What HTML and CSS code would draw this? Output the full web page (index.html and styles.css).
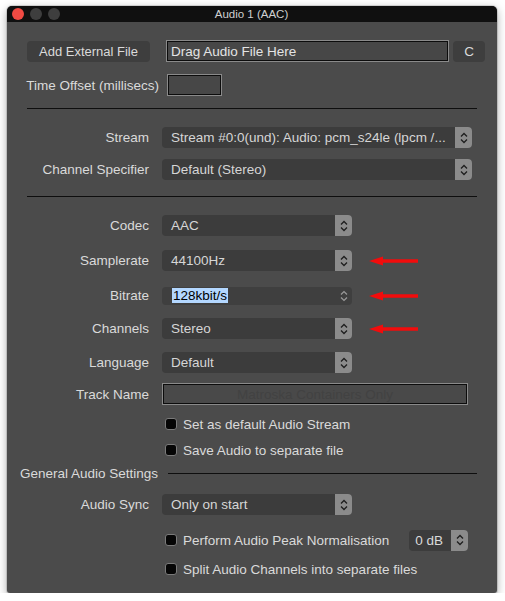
FILE: index.html
```html
<!DOCTYPE html>
<html>
<head>
<meta charset="utf-8">
<link rel="stylesheet" href="styles.css">
</head>
<body>
<div class="window">
  <div class="titlebar">
    <div class="lights"><span class="light red"></span><span class="light"></span><span class="light"></span></div>
    <div class="title">Audio 1 (AAC)</div>
  </div>
  <div class="content">
    <div class="row top">
      <div class="btn add">Add External File</div>
      <div class="field drag">Drag Audio File Here</div>
      <div class="btn c">C</div>
    </div>
    <div class="row offset">
      <div class="lbl wide">Time Offset (millisecs)</div>
      <div class="field small"></div>
    </div>
    <div class="sep s1"></div>
    <div class="row r-stream">
      <div class="lbl">Stream</div>
      <div class="popup long"><span class="ptext">Stream #0:0(und): Audio: pcm_s24le (lpcm /...</span><span class="stepper"><svg width="8" height="12" viewBox="0 0 8 12"><path d="M1 4.5 L4 1.5 L7 4.5 M1 7.5 L4 10.5 L7 7.5" fill="none" stroke="#1e1e1e" stroke-width="1.3"/></svg></span></div>
    </div>
    <div class="row r-chan">
      <div class="lbl">Channel Specifier</div>
      <div class="popup long"><span class="ptext">Default (Stereo)</span><span class="stepper"><svg width="8" height="12" viewBox="0 0 8 12"><path d="M1 4.5 L4 1.5 L7 4.5 M1 7.5 L4 10.5 L7 7.5" fill="none" stroke="#1e1e1e" stroke-width="1.3"/></svg></span></div>
    </div>
    <div class="sep s2"></div>
    <div class="row r-codec">
      <div class="lbl">Codec</div>
      <div class="popup mid"><span class="ptext">AAC</span><span class="stepper"><svg width="8" height="12" viewBox="0 0 8 12"><path d="M1 4.5 L4 1.5 L7 4.5 M1 7.5 L4 10.5 L7 7.5" fill="none" stroke="#1e1e1e" stroke-width="1.3"/></svg></span></div>
    </div>
    <div class="row r-sample">
      <div class="lbl">Samplerate</div>
      <div class="popup mid"><span class="ptext">44100Hz</span><span class="stepper"><svg width="8" height="12" viewBox="0 0 8 12"><path d="M1 4.5 L4 1.5 L7 4.5 M1 7.5 L4 10.5 L7 7.5" fill="none" stroke="#1e1e1e" stroke-width="1.3"/></svg></span></div>
      <svg class="arrow" width="49" height="10" viewBox="0 0 49 10"><path d="M0 5 L14 0.5 L14 3.3 L49 3.3 L49 6.7 L14 6.7 L14 9.5 Z" fill="#f20c0c"/></svg>
    </div>
    <div class="row r-bit">
      <div class="lbl">Bitrate</div>
      <div class="combo"><span class="sel">128kbit/s</span><span class="cstep"><svg width="8" height="12" viewBox="0 0 8 12"><path d="M1 4.5 L4 1.5 L7 4.5 M1 7.5 L4 10.5 L7 7.5" fill="none" stroke="#9a9a9a" stroke-width="1.2"/></svg></span></div>
      <svg class="arrow" width="49" height="10" viewBox="0 0 49 10"><path d="M0 5 L14 0.5 L14 3.3 L49 3.3 L49 6.7 L14 6.7 L14 9.5 Z" fill="#f20c0c"/></svg>
    </div>
    <div class="row r-chs">
      <div class="lbl">Channels</div>
      <div class="popup mid"><span class="ptext">Stereo</span><span class="stepper"><svg width="8" height="12" viewBox="0 0 8 12"><path d="M1 4.5 L4 1.5 L7 4.5 M1 7.5 L4 10.5 L7 7.5" fill="none" stroke="#1e1e1e" stroke-width="1.3"/></svg></span></div>
      <svg class="arrow" width="49" height="10" viewBox="0 0 49 10"><path d="M0 5 L14 0.5 L14 3.3 L49 3.3 L49 6.7 L14 6.7 L14 9.5 Z" fill="#f20c0c"/></svg>
    </div>
    <div class="row r-lang">
      <div class="lbl">Language</div>
      <div class="popup mid"><span class="ptext">Default</span><span class="stepper"><svg width="8" height="12" viewBox="0 0 8 12"><path d="M1 4.5 L4 1.5 L7 4.5 M1 7.5 L4 10.5 L7 7.5" fill="none" stroke="#1e1e1e" stroke-width="1.3"/></svg></span></div>
    </div>
    <div class="row r-track">
      <div class="lbl">Track Name</div>
      <div class="field track">Matroska Containers Only</div>
    </div>
    <div class="row cb r-cb1"><span class="box"></span><span>Set as default Audio Stream</span></div>
    <div class="row cb r-cb2"><span class="box"></span><span>Save Audio to separate file</span></div>
    <div class="row r-gas">
      <div class="gas">General Audio Settings</div>
      <div class="gline"></div>
    </div>
    <div class="row r-sync">
      <div class="lbl">Audio Sync</div>
      <div class="popup mid"><span class="ptext">Only on start</span><span class="stepper"><svg width="8" height="12" viewBox="0 0 8 12"><path d="M1 4.5 L4 1.5 L7 4.5 M1 7.5 L4 10.5 L7 7.5" fill="none" stroke="#1e1e1e" stroke-width="1.3"/></svg></span></div>
    </div>
    <div class="row cb r-cb3"><span class="box"></span><span>Perform Audio Peak Normalisation</span>
      <div class="spin"><span class="stext">0 dB</span><span class="stepper"><svg width="8" height="12" viewBox="0 0 8 12"><path d="M1 4.5 L4 1.5 L7 4.5 M1 7.5 L4 10.5 L7 7.5" fill="none" stroke="#1e1e1e" stroke-width="1.3"/></svg></span></div>
    </div>
    <div class="row cb r-cb4"><span class="box"></span><span>Split Audio Channels into separate files</span></div>
  </div>
</div>
</body>
</html>
```

FILE: styles.css
```css
html, body {
  margin: 0;
  padding: 0;
  background: #ffffff;
}
body {
  font-family: "Liberation Sans", Arial, sans-serif;
  font-size: 13.5px;
  color: #dadada;
}
.window {
  margin: 6px 0 0 7px;
  width: 490px;
  height: 587px;
  background: #4b4b4b;
  border-radius: 5px 5px 3px 3px;
  box-shadow: 0 3px 10px rgba(0,0,0,0.35), 0 0 0 1px rgba(0,0,0,0.12);
  overflow: hidden;
  display: flex;
  flex-direction: column;
}
.titlebar {
  height: 16px;
  background: #101010;
  display: flex;
  align-items: center;
  flex: none;
}
.lights {
  display: flex;
  gap: 6px;
  padding-left: 5px;
}
.light {
  width: 12px;
  height: 12px;
  border-radius: 50%;
  background: #3e3e3e;
}
.light.red { background: #f04a43; }
.title {
  flex: 1;
  text-align: center;
  font-size: 11.5px;
  color: #cfcfcf;
  margin-left: -54px;
}
.content {
  display: flex;
  flex-direction: column;
}
.row {
  display: flex;
  align-items: center;
}
.lbl {
  width: 142px;
  margin-right: 13px;
  text-align: right;
  flex: none;
  white-space: nowrap;
}
.lbl.wide {
  width: 152px;
  margin-right: 8px;
}
.top {
  margin-top: 18px;
  padding-left: 20px;
  height: 22px;
}
.btn {
  height: 21px;
  background: #3e3e3e;
  border-radius: 4px;
  display: flex;
  align-items: center;
  justify-content: center;
  color: #dadada;
  white-space: nowrap;
}
.btn.add { width: 123px; font-size: 13px; }
.btn.c { width: 32px; margin-left: 4px; }
.field {
  box-sizing: border-box;
  border: 1px solid #8a8a8a;
  box-shadow: inset 0 0 0 1px #0c0c0c;
  background: #474747;
}
.field.drag {
  width: 283px;
  height: 22px;
  margin-left: 16px;
  padding-left: 4px;
  display: flex;
  align-items: center;
  color: #e4e4e4;
}
.offset {
  margin-top: 12px;
  height: 22px;
}
.field.small {
  width: 55px;
  height: 22px;
}
.sep {
  height: 1px;
  background: #0e0e0e;
  margin: 0 20px;
}
.s1 { margin-top: 12px; }
.s2 { margin-top: 16px; }
.popup {
  height: 21px;
  background: #3c3c3c;
  border-radius: 4px;
  display: flex;
  align-items: center;
  overflow: hidden;
  flex: none;
}
.popup.long { width: 310px; }
.popup.mid { width: 190px; }
.ptext {
  flex: 1;
  padding-left: 9px;
  color: #d6d6d6;
  white-space: nowrap;
  overflow: hidden;
}
.stepper {
  width: 17px;
  height: 100%;
  background: #8b8b8b;
  display: flex;
  align-items: center;
  justify-content: center;
  flex: none;
}
.r-stream { margin-top: 18px; }
.r-chan { margin-top: 11px; }
.r-codec { margin-top: 18px; }
.r-sample { margin-top: 14px; }
.r-bit { margin-top: 14px; height: 21px; }
.r-chs { margin-top: 12px; }
.r-lang { margin-top: 13px; }
.combo {
  width: 190px;
  height: 18px;
  background: #3f3f3f;
  border-radius: 4px;
  display: flex;
  align-items: center;
  padding-left: 10px;
  box-sizing: border-box;
  flex: none;
}
.sel {
  background: #b3d7ff;
  color: #000;
  padding: 0 1px;
  line-height: 15px;
}
.cstep {
  margin-left: auto;
  width: 17px;
  display: flex;
  justify-content: center;
}
.arrow {
  margin-left: 17px;
  flex: none;
}
.r-track { margin-top: 10px; }
.field.track {
  width: 306px;
  height: 22px;
  background: #494949;
  display: flex;
  align-items: center;
  justify-content: center;
  color: #424242;
}
.cb {
  padding-left: 158px;
  height: 16px;
  gap: 6px;
  white-space: nowrap;
}
.box {
  width: 12px;
  height: 12px;
  box-sizing: border-box;
  background: #050505;
  border: 1px solid #7a7a7a;
  border-radius: 3px;
  flex: none;
}
.r-cb1 { margin-top: 11px; }
.r-cb2 { margin-top: 10px; }
.r-gas {
  margin-top: 7px;
  height: 16px;
}
.gas {
  padding-left: 13px;
  width: 148px;
  flex: none;
  white-space: nowrap;
}
.gline {
  flex: 1;
  height: 1px;
  background: #0e0e0e;
  margin-right: 20px;
}
.r-sync { margin-top: 13px; }
.r-cb3 {
  margin-top: 17px;
  padding-right: 29px;
}
.spin {
  margin-left: auto;
  width: 59px;
  height: 21px;
  background: #3c3c3c;
  border-radius: 4px;
  display: flex;
  align-items: center;
  overflow: hidden;
}
.stext {
  flex: 1;
  text-align: right;
  padding-right: 8px;
}
.r-cb4 { margin-top: 13px; }
```
